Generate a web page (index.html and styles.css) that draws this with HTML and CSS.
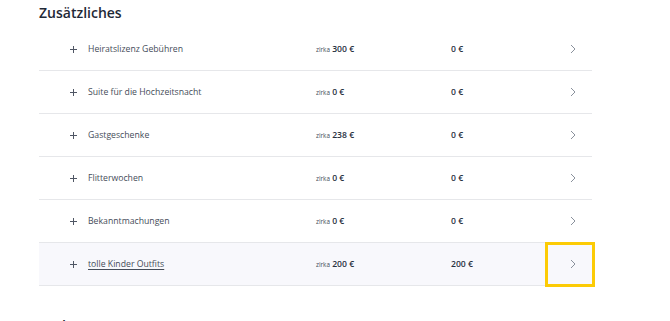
FILE: index.html
```html
<!DOCTYPE html>
<html lang="de">
<head>
<meta charset="utf-8">
<title>Zusätzliches</title>
<link rel="stylesheet" href="styles.css">
</head>
<body>
<main class="page">
  <h2 class="section-title">Zusätzliches</h2>
  <div class="list">
    <div class="row">
      <span class="plus"><svg width="7" height="7" viewBox="0 0 7 7"><path d="M3.5 0V7M0 3.5H7" stroke="#4f5664" stroke-width="1"/></svg></span>
      <span class="name">Heiratslizenz Gebühren</span>
      <span class="est"><small>zirka</small> 300 €</span>
      <span class="amount">0 €</span>
      <span class="go"><svg width="6" height="10" viewBox="0 0 6 10"><path d="M1 1L5 5L1 9" fill="none" stroke="#8a919c" stroke-width="1"/></svg></span>
    </div>
    <div class="row">
      <span class="plus"><svg width="7" height="7" viewBox="0 0 7 7"><path d="M3.5 0V7M0 3.5H7" stroke="#4f5664" stroke-width="1"/></svg></span>
      <span class="name">Suite für die Hochzeitsnacht</span>
      <span class="est"><small>zirka</small> 0 €</span>
      <span class="amount">0 €</span>
      <span class="go"><svg width="6" height="10" viewBox="0 0 6 10"><path d="M1 1L5 5L1 9" fill="none" stroke="#8a919c" stroke-width="1"/></svg></span>
    </div>
    <div class="row">
      <span class="plus"><svg width="7" height="7" viewBox="0 0 7 7"><path d="M3.5 0V7M0 3.5H7" stroke="#4f5664" stroke-width="1"/></svg></span>
      <span class="name">Gastgeschenke</span>
      <span class="est"><small>zirka</small> 238 €</span>
      <span class="amount">0 €</span>
      <span class="go"><svg width="6" height="10" viewBox="0 0 6 10"><path d="M1 1L5 5L1 9" fill="none" stroke="#8a919c" stroke-width="1"/></svg></span>
    </div>
    <div class="row">
      <span class="plus"><svg width="7" height="7" viewBox="0 0 7 7"><path d="M3.5 0V7M0 3.5H7" stroke="#4f5664" stroke-width="1"/></svg></span>
      <span class="name">Flitterwochen</span>
      <span class="est"><small>zirka</small> 0 €</span>
      <span class="amount">0 €</span>
      <span class="go"><svg width="6" height="10" viewBox="0 0 6 10"><path d="M1 1L5 5L1 9" fill="none" stroke="#8a919c" stroke-width="1"/></svg></span>
    </div>
    <div class="row">
      <span class="plus"><svg width="7" height="7" viewBox="0 0 7 7"><path d="M3.5 0V7M0 3.5H7" stroke="#4f5664" stroke-width="1"/></svg></span>
      <span class="name">Bekanntmachungen</span>
      <span class="est"><small>zirka</small> 0 €</span>
      <span class="amount">0 €</span>
      <span class="go"><svg width="6" height="10" viewBox="0 0 6 10"><path d="M1 1L5 5L1 9" fill="none" stroke="#8a919c" stroke-width="1"/></svg></span>
    </div>
    <div class="row row-active">
      <span class="plus"><svg width="7" height="7" viewBox="0 0 7 7"><path d="M3.5 0V7M0 3.5H7" stroke="#4f5664" stroke-width="1"/></svg></span>
      <span class="name name-link">tolle Kinder Outfits</span>
      <span class="est"><small>zirka</small> 200 €</span>
      <span class="amount">200 €</span>
      <span class="go go-focus"><svg width="6" height="10" viewBox="0 0 6 10"><path d="M1 1L5 5L1 9" fill="none" stroke="#8a919c" stroke-width="1"/></svg></span>
    </div>
  </div>
  <h2 class="section-title next-title">Andere</h2>
</main>
</body>
</html>
```

FILE: styles.css
```css
html, body {
  margin: 0;
  padding: 0;
  background: #ffffff;
}

body {
  font-family: "Open Sans", "Liberation Sans", sans-serif;
  color: #2b3444;
  overflow: hidden;
}

.page {
  padding: 3px 0 0 39px;
  width: 553px;
}

.section-title {
  margin: 0;
  font-size: 14px;
  line-height: 20px;
  font-weight: 600;
  color: #1f2937;
}

.list {
  margin-top: 5px;
}

.row {
  display: grid;
  grid-template-columns: 49px 228px 135px 97px 44px;
  align-items: center;
  height: 42px;
  border-bottom: 1px solid #e6e7ea;
}

.row-active {
  background: #f8f8fc;
}

.plus {
  display: flex;
  justify-content: flex-end;
  padding-right: 11px;
}

.plus svg {
  display: block;
}

.name {
  font-size: 8.7px;
  color: #454c59;
  white-space: nowrap;
}

.name-link {
  text-decoration: underline;
  text-underline-offset: 2px;
}

.est {
  font-size: 8.6px;
  font-weight: 600;
  color: #283141;
  white-space: nowrap;
}

.est small {
  font-size: 6.3px;
  font-weight: 400;
  color: #454c59;
}

.amount {
  font-size: 8.6px;
  font-weight: 600;
  color: #283141;
}

.go {
  display: flex;
  align-items: center;
  height: 39px;
  padding-left: 22px;
  box-sizing: border-box;
}

.go svg {
  display: block;
}

.go-focus {
  outline: 3px solid #fccb05;
  outline-offset: 0;
}

.next-title {
  margin-top: 30px;
}
```
